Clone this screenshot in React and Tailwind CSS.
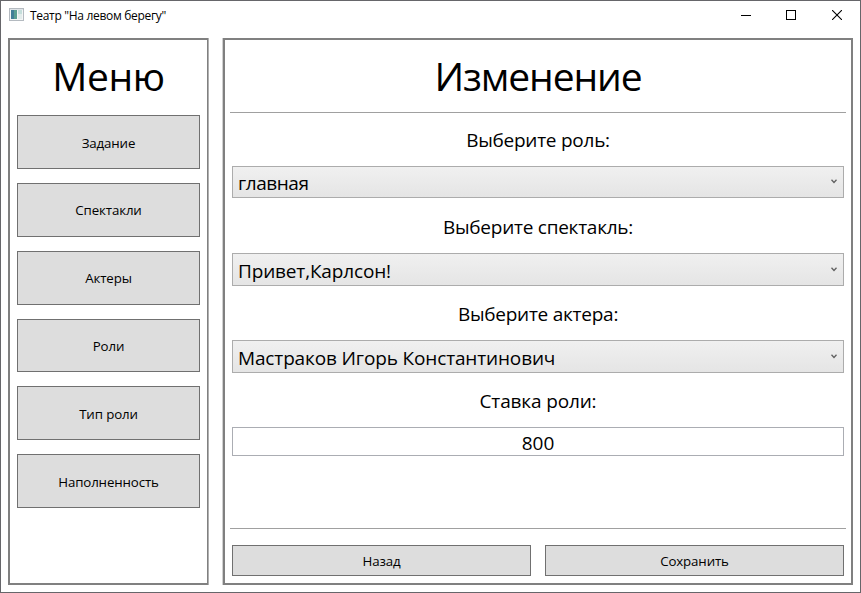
const menuItems = [
  { label: 'Задание', box: 'h-[54px] mb-[14px] pt-[3px]' },
  { label: 'Спектакли', box: 'h-[54px] mb-[14px] pt-px' },
  { label: 'Актеры', box: 'h-[54px] mb-[14px] pt-px' },
  { label: 'Роли', box: 'h-[53px] mb-[14px] pt-[3px]' },
  { label: 'Тип роли', box: 'h-[54px] mb-[14px] pt-[3px]' },
  { label: 'Наполненность', box: 'h-[54px] pt-[3px]' },
];

const fields = [
  { label: 'Выберите роль:', value: 'главная', row: 'h-[87px]', box: 'h-8 tracking-[-0.45px]' },
  { label: 'Выберите спектакль:', value: 'Привет,Карлсон!', row: 'h-[87px]', box: 'h-[33px] tracking-[-0.15px]' },
  { label: 'Выберите актера:', value: 'Мастраков Игорь Константинович', row: 'h-[87px]', box: 'h-[33px] tracking-[-0.14px]' },
];

function TitleBar() {
  return (
    <header className="flex h-[37px] shrink-0 items-start pl-2">
      <svg width="16" height="14" viewBox="0 0 16 14" className="mt-[7px]" shapeRendering="crispEdges">
        <rect x="0.5" y="0.5" width="14" height="12" fill="#f4f6f6" stroke="#b4bac0" />
        <rect x="1" y="1" width="13" height="1" fill="#dfe4e8" />
        <rect x="2" y="2" width="6" height="9" fill="#5a9f92" />
        <rect x="2" y="2" width="3" height="9" fill="#417f98" />
        <rect x="9" y="2" width="4" height="4" fill="#c5dedb" />
        <rect x="9" y="6" width="4" height="5" fill="#e3eceb" />
      </svg>
      <span className="ml-[5px] mt-1.5 text-[12px] leading-[18px] tracking-[-0.31px]">Театр "На левом берегу"</span>
      <div className="ml-auto mr-[18px] mt-[9px] flex">
        <svg width="10" height="11" viewBox="0 0 10 11" shapeRendering="crispEdges">
          <path d="M0 5.5h10" stroke="#000" />
        </svg>
        <svg width="10" height="10" viewBox="0 0 10 10" className="ml-[35px]" shapeRendering="crispEdges">
          <rect x="0.5" y="0.5" width="9" height="9" fill="none" stroke="#000" />
        </svg>
        <svg width="10" height="10" viewBox="0 0 10 10" className="ml-9">
          <path d="M0 0l10 10M10 0L0 10" stroke="#000" strokeWidth="1.1" />
        </svg>
      </div>
    </header>
  );
}

function Sidebar() {
  return (
    <nav className="flex w-[200px] flex-col border-2 border-r border-[#808080] px-[7px] shadow-[1px_0_0_#b0b0b0]">
      <h1 className="h-[75px] text-center text-[39px] leading-[72px] tracking-[-0.4px]">Меню</h1>
      {menuItems.map((item) => (
        <button
          key={item.label}
          className={'shrink-0 border border-[#707070] bg-[#dddddd] text-[13.3px] tracking-[-0.13px] ' + item.box}
        >
          {item.label}
        </button>
      ))}
    </nav>
  );
}

function Combo({ value, box }) {
  return (
    <div
      className={
        'flex items-center justify-between border border-[#acacac] bg-linear-to-b from-[#f0f0f0] to-[#e5e5e5] pl-[5px] pr-[6px] ' + box
      }
    >
      <span className="pt-0.5 text-[19px] leading-[28px]">{value}</span>
      <svg width="6" height="5" viewBox="0 0 6 5" className="mb-px">
        <path d="M0.5 0.8L3 3.5L5.5 0.8" fill="none" stroke="#606060" strokeWidth="1.3" />
      </svg>
    </div>
  );
}

function EditPanel() {
  return (
    <main className="flex w-[630px] flex-col border-2 border-[#808080] px-[5px] shadow-[-1px_0_0_#d0d0d0]">
      <h2 className="h-[72px] text-center text-[39px] leading-[72px] tracking-[-1.1px]">Изменение</h2>
      <div className="h-px bg-[#a0a0a0]" />
      <div className="flex h-[415px] flex-col px-[2px]">
        <div className="h-[13px]" />
        {fields.map((f) => (
          <div key={f.label} className={'shrink-0 ' + f.row}>
            <div className="h-10 text-center text-[19px] leading-[28px] tracking-[-0.25px]">{f.label}</div>
            <Combo value={f.value} box={f.box} />
          </div>
        ))}
        <div className="h-10 text-center text-[19px] leading-[28px] tracking-[-0.15px]">Ставка роли:</div>
        <div className="h-[29px] border border-[#abadb3] pt-px text-center text-[19px] leading-[28px]">800</div>
      </div>
      <div className="h-px bg-[#a0a0a0]" />
      <div className="mt-4 flex gap-[14px] px-[2px]">
        <button className="h-[31px] flex-1 border border-[#707070] bg-[#dddddd] pt-0.5 text-[13.3px] tracking-[-0.13px]">Назад</button>
        <button className="h-[31px] flex-1 border border-[#707070] bg-[#dddddd] pt-0.5 text-[13.3px] tracking-[-0.13px]">Сохранить</button>
      </div>
    </main>
  );
}

export default function App() {
  return (
    <div className="flex h-[593px] w-[861px] flex-col border border-[#66666a] bg-white font-['Open_Sans','Noto_Sans',sans-serif] text-black">
      <TitleBar />
      <div className="flex h-[547px] justify-between pl-[7px] pr-[7px]">
        <Sidebar />
        <EditPanel />
      </div>
    </div>
  );
}
